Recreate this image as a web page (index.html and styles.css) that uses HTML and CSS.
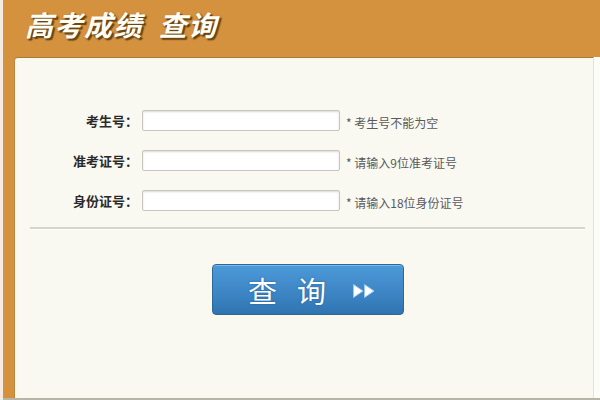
FILE: index.html
```html
<!DOCTYPE html>
<html lang="zh-CN">
<head>
<meta charset="utf-8">
<title>高考成绩 查询</title>
<link rel="stylesheet" href="styles.css">
</head>
<body>
<div class="page">
  <header class="topbar">
    <h1 class="title">高考成绩&nbsp;&nbsp;查询</h1>
  </header>
  <div class="body-row">
    <main class="panel">
      <form class="form">
        <div class="row">
          <label class="label" for="ksh">考生号：</label>
          <input class="field" id="ksh" type="text">
          <span class="hint">* 考生号不能为空</span>
        </div>
        <div class="row">
          <label class="label" for="zkz">准考证号：</label>
          <input class="field" id="zkz" type="text">
          <span class="hint">* 请输入9位准考证号</span>
        </div>
        <div class="row">
          <label class="label" for="sfz">身份证号：</label>
          <input class="field" id="sfz" type="text">
          <span class="hint">* 请输入18位身份证号</span>
        </div>
        <div class="divider"></div>
        <button class="btn" type="button">
          <span class="btn-char">查</span>
          <span class="btn-char">询</span>
          <svg class="chev" width="22" height="14" viewBox="0 0 22 14">
            <polygon points="0.5,0.5 10,7 0.5,13.5" fill="#ffffff" stroke="#9cc8ee" stroke-width="1"/>
            <polygon points="11.5,0.5 21,7 11.5,13.5" fill="#ffffff" stroke="#9cc8ee" stroke-width="1"/>
          </svg>
        </button>
      </form>
    </main>
    <div class="right-strip"></div>
  </div>
</div>
</body>
</html>
```
FILE: styles.css
```css
html, body {
  margin: 0;
  padding: 0;
}
body {
  width: 600px;
  height: 400px;
  overflow: hidden;
  background: #d4923f;
  font-family: "Noto Sans CJK SC", "Noto Sans", sans-serif;
}
.page {
  height: 400px;
  border-left: 3px solid #f4ece2;
  box-sizing: border-box;
  display: flex;
  flex-direction: column;
  background: #d4923f;
}
.topbar {
  height: 57px;
  box-sizing: border-box;
  padding: 6px 0 0 22px;
  background: #d4923f;
}
.title {
  margin: 0;
  font-size: 28px;
  line-height: 36px;
  font-weight: bold;
  font-style: italic;
  color: #fffdf4;
  letter-spacing: 1.5px;
  text-shadow: 2px 2px 1px #6a4515, 1px 1px 2px #6a4515;
}
.body-row {
  flex: 1;
  display: flex;
  padding-left: 11px;
  border-bottom: 2px solid #b8b4a8;
}
.panel {
  flex: 1;
  box-sizing: border-box;
  background: #f9f9f2;
  border-top: 1px solid #a97938;
  border-left: 1px solid #b98540;
  border-right: 1px solid #e4e2d8;
  border-top-left-radius: 4px;
  box-shadow: inset 0 1px 0 #fffbe8;
}
.right-strip {
  width: 6px;
  background: #fdfdf7;
}
.form {
  padding-top: 52px;
}
.row {
  display: flex;
  align-items: center;
  height: 21px;
  margin-bottom: 19px;
}
.label {
  width: 123px;
  text-align: right;
  font-size: 13px;
  font-weight: bold;
  color: #2a2a2a;
  margin-right: 4px;
}
.field {
  width: 198px;
  height: 21px;
  box-sizing: border-box;
  border: 1px solid #c9c7bd;
  border-radius: 2px;
  background: #ffffff;
  box-shadow: inset 0 1px 2px #dcdad2;
  padding: 0 4px;
  margin: 0;
}
.hint {
  margin-left: 6px;
  font-size: 12px;
  color: #5a5a5a;
  padding-top: 3px;
}
.divider {
  margin: -3px 8px 0 15px;
  height: 2px;
  background: #d6d5cc;
  border-bottom: 1px solid #ffffff;
}
.btn {
  margin: 34px 0 0 197px;
  width: 192px;
  height: 51px;
  box-sizing: border-box;
  display: flex;
  align-items: center;
  padding: 0 0 0 35px;
  border: 1px solid #2a679c;
  border-radius: 4px;
  background: linear-gradient(#4d99d8, #3f88c8 50%, #2f74b1);
  box-shadow: inset 0 1px 0 #7cb8ea, 0 0 3px 2px #fff8e6;
  cursor: pointer;
}
.btn-char {
  font-family: "Noto Sans CJK SC", sans-serif;
  font-size: 29px;
  line-height: 36px;
  color: #ffffff;
  text-shadow: 0 0 2px #1d5c94;
  margin-right: 20px;
}
.btn-char + .btn-char {
  margin-right: 27px;
}
.chev {
  display: block;
  margin-top: 2px;
}
```
